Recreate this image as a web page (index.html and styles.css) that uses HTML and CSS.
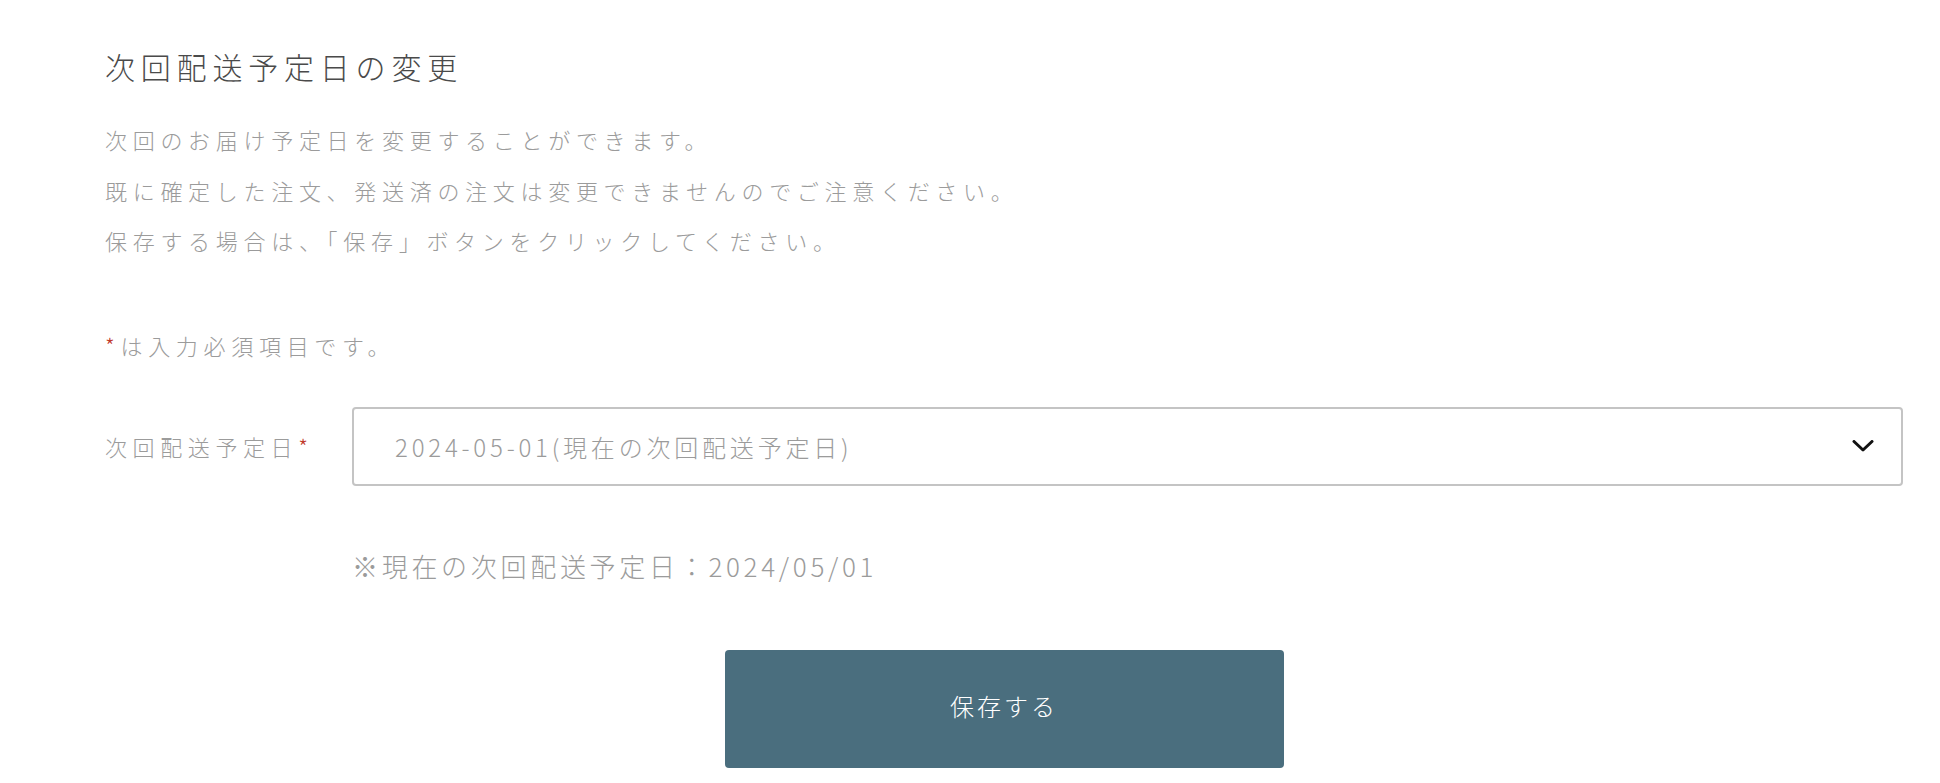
FILE: index.html
```html
<!DOCTYPE html>
<html lang="ja">
<head>
<meta charset="utf-8">
<title>次回配送予定日の変更</title>
<link rel="stylesheet" href="styles.css">
</head>
<body>
<main class="page">
  <h1 class="title">次回配送予定日の変更</h1>
  <div class="intro">
    <p class="intro-line">次回のお届け予定日を変更することができます。</p>
    <p class="intro-line">既に確定した注文、発送済の注文は変更できませんのでご注意ください。</p>
    <p class="intro-line">保存する場合は、「保存」ボタンをクリックしてください。</p>
  </div>
  <p class="required-note"><span class="req">*</span>は入力必須項目です。</p>
  <div class="form-row">
    <div class="form-label">次回配送予定日<span class="req">*</span></div>
    <div class="form-field">
      <div class="select">
        <span class="select-value">2024-05-01(現在の次回配送予定日)</span>
        <svg class="chevron" width="22" height="12" viewBox="0 0 22 12" aria-hidden="true">
          <path d="M2 1.5 L11 10 L20 1.5" fill="none" stroke="#111" stroke-width="3" stroke-linecap="round" stroke-linejoin="round"/>
        </svg>
      </div>
      <p class="current-note">※現在の次回配送予定日：2024/05/01</p>
    </div>
  </div>
  <div class="actions">
    <button class="save-btn" type="button">保存する</button>
  </div>
</main>
</body>
</html>
```
FILE: styles.css
```css
html, body {
  margin: 0;
  padding: 0;
  background: #ffffff;
}

body {
  font-family: "Noto Sans CJK JP", "Noto Sans", sans-serif;
  font-weight: 300;
  color: #999999;
}

.page {
  padding: 44px 37px 0 105px;
}

.title {
  margin: 0;
  font-size: 30px;
  font-weight: 300;
  line-height: 45px;
  letter-spacing: 5.8px;
  color: #4a4a4a;
}

.intro {
  margin-top: 25px;
}

.intro-line {
  margin: 0;
  font-size: 22px;
  line-height: 50.5px;
  letter-spacing: 5.7px;
  color: #9b9b9b;
}

.required-note {
  margin: 54px 0 0;
  font-size: 22px;
  line-height: 50px;
  letter-spacing: 5.7px;
  color: #9b9b9b;
}

.req {
  color: #c0392b;
}

.form-row {
  display: flex;
  align-items: flex-start;
  margin-top: 37px;
}

.form-label {
  width: 247px;
  flex: none;
  height: 79px;
  display: flex;
  align-items: center;
  font-size: 22px;
  letter-spacing: 5.6px;
  color: #9b9b9b;
}

.form-field {
  flex: 1;
}

.select {
  box-sizing: border-box;
  height: 79px;
  border: 2px solid #c4c4c4;
  border-radius: 4px;
  padding: 0 27px 0 41px;
  display: flex;
  align-items: center;
  justify-content: space-between;
}

.select-value {
  font-size: 24px;
  letter-spacing: 3.8px;
  color: #9b9b9b;
}

.chevron {
  display: block;
}

.current-note {
  margin: 60px 0 0;
  font-size: 26px;
  line-height: 40px;
  letter-spacing: 3.7px;
  color: #9b9b9b;
}

.actions {
  display: flex;
  justify-content: center;
  margin-top: 64px;
}

.save-btn {
  width: 559px;
  height: 118px;
  padding: 0 0 6px;
  border: none;
  border-radius: 4px;
  background: #4a6e7e;
  color: #ffffff;
  font-family: "Noto Sans CJK JP", "Noto Sans", sans-serif;
  font-weight: 300;
  font-size: 24px;
  letter-spacing: 3px;
  cursor: pointer;
}
```
